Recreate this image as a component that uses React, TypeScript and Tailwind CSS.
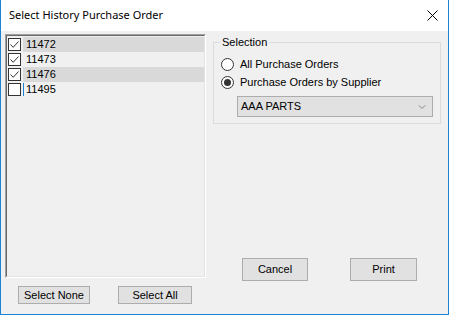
import { ChevronDown } from "lucide-react";

const items = [
  { id: "11472", checked: true, selected: true },
  { id: "11473", checked: true, selected: false },
  { id: "11476", checked: true, selected: true },
  { id: "11495", checked: false, selected: false },
];

const CheckBox = ({ checked }: { checked: boolean }) => (
  <div className="w-[13px] h-[13px] border border-[#333333] bg-white flex items-center justify-center shrink-0">
    {checked && (
      <svg width="11" height="11" viewBox="0 0 11 11">
        <path d="M1.5 5.5 L4.2 8.3 L9.5 2.5" fill="none" stroke="#333333" strokeWidth="1" />
      </svg>
    )}
  </div>
);

const Radio = ({ on }: { on: boolean }) => (
  <div className="w-[13px] h-[13px] rounded-full border border-[#333333] bg-white flex items-center justify-center shrink-0">
    {on && <div className="w-[7px] h-[7px] rounded-full bg-[#333333]" />}
  </div>
);

const Button = ({ label, className }: { label: string; className: string }) => (
  <button className={`bg-[#e1e1e1] border border-[#adadad] flex items-center justify-center text-black ${className}`}>
    {label}
  </button>
);

export default function App() {
  return (
    <div className="w-[449px] h-[315px] flex flex-col bg-[#f0f0f0] border-x border-b border-[#1883d7] font-['Liberation_Sans',Arial,sans-serif] text-[11px] text-black">
      {/* Title bar */}
      <div className="h-[31px] bg-white flex items-center justify-between pl-[8px] pr-[10px] shrink-0">
        <span className="font-['Noto_Sans',sans-serif] text-[11px] text-black">Select History Purchase Order</span>
        <svg width="11" height="11" viewBox="0 0 11 11">
          <path d="M0.5 0.5 L10.5 10.5 M10.5 0.5 L0.5 10.5" stroke="#000" strokeWidth="1" />
        </svg>
      </div>

      {/* Body */}
      <div className="flex flex-1 pl-[4px] pt-[3px]">
        {/* Left column */}
        <div className="w-[201px] flex flex-col">
          <div className="h-[244px] border border-t-[#a0a0a0] border-l-[#a0a0a0] border-r-white border-b-white">
            <div className="h-full border border-t-[#696969] border-l-[#696969] border-r-[#e3e3e3] border-b-[#e3e3e3] pt-[1px]">
              {items.map((it) => (
                <div key={it.id} className="h-[15px] flex items-center pl-[1px]">
                  <CheckBox checked={it.checked} />
                  <div className="relative flex-1 h-full ml-[2px] flex items-center">
                    {it.id === "11495" && <div className="absolute left-0 top-[1px] w-[1px] h-[13px] bg-[#1883d7]" />}
                    <div className={`flex-1 h-full flex items-center pl-[3px] ${it.selected ? "bg-[#d9d9d9]" : ""}`}>
                      {it.id}
                    </div>
                  </div>
                </div>
              ))}
            </div>
          </div>
          <div className="flex mt-[8px]">
            <Button label="Select None" className="ml-[13px] w-[72px] h-[18px]" />
            <Button label="Select All" className="ml-[28px] w-[74px] h-[18px]" />
          </div>
        </div>

        {/* Right column */}
        <div className="ml-[7px] flex flex-col">
          <fieldset className="w-[228px] h-[88px] border border-[#dcdcdc] mt-[2px] px-[7px]">
            <legend className="ml-[-1px] px-[2px] leading-[13px]">Selection</legend>
            <div className="flex items-center h-[18px] mt-[6px]">
              <Radio on={false} />
              <span className="ml-[6px]">All Purchase Orders</span>
            </div>
            <div className="flex items-center h-[18px]">
              <Radio on={true} />
              <span className="ml-[6px]">Purchase Orders by Supplier</span>
            </div>
            <div className="ml-[16px] mt-[5px] w-[196px] h-[21px] bg-[#e1e1e1] border border-[#adadad] flex items-center justify-between pl-[3px] pr-[4px]">
              <span>AAA PARTS</span>
              <ChevronDown size={12} strokeWidth={1.25} color="#555" />
            </div>
          </fieldset>
          <div className="flex mt-[134px]">
            <Button label="Cancel" className="ml-[29px] w-[66px] h-[23px]" />
            <Button label="Print" className="ml-[42px] w-[67px] h-[23px]" />
          </div>
        </div>
      </div>
    </div>
  );
}
